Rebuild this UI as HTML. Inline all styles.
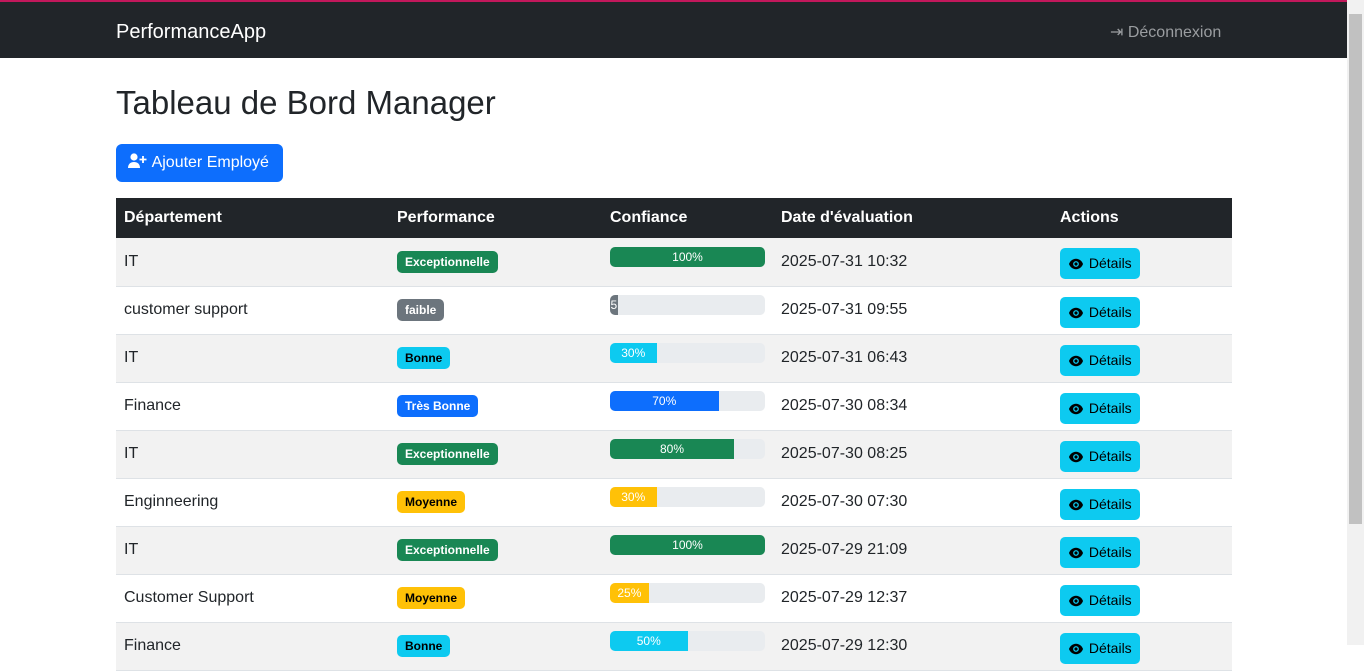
<!DOCTYPE html>
<html><head><meta charset="utf-8"><style>
*{box-sizing:border-box;margin:0;padding:0}
body{width:1364px;height:645px;overflow:hidden;font-family:"Liberation Sans",sans-serif;color:#212529;background:#fff;position:relative}
.top{position:absolute;left:0;top:0;width:1347px;height:58px;background:#212529;border-top:2px solid #c2185b}
.brand{position:absolute;left:116px;top:19px;font-size:20px;color:#fff}
.logout{position:absolute;left:1110px;top:20px;font-size:16px;color:#9a9da0}
.sb{position:absolute;right:0;top:0;width:17px;height:645px;background:#f1f1f1}
.sb div{position:absolute;left:2px;top:14px;width:13px;height:510px;background:#c1c1c1}
h1{position:absolute;left:116px;top:84px;font-size:33px;font-weight:500}
.add{position:absolute;left:116px;top:144px;width:167px;height:38px;background:#0d6efd;border-radius:6px;color:#fff;font-size:16px;padding:9px 0 0 12px}
table{position:absolute;left:116px;top:198px;width:1116px;border-collapse:collapse;font-size:16px}
th{background:#212529;color:#fff;text-align:left;height:40px;padding:0 8px;font-weight:bold}
td{height:48px;padding:0 8px;border-bottom:1px solid #dee2e6;vertical-align:middle}
tr:nth-child(even) td{background:#f2f2f2}
.b{display:inline-block;font-size:12px;font-weight:bold;padding:4px 8px;border-radius:5px;color:#fff;margin-top:0}
.pg{width:155px;height:20px;background:#e9ecef;border-radius:5px;overflow:hidden;margin-top:-10px}
.pg div{height:20px;color:#fff;font-size:12px;text-align:center;line-height:20px}
.btn{display:inline-block;background:#0dcaf0;color:#000;border-radius:5px;width:80px;height:31px;padding:7px 0 0 9px;font-size:14px;margin-top:4px}
.btn svg{vertical-align:-2px;margin-right:2px}
</style></head><body>
<div class="top"><div class="brand">PerformanceApp</div><div class="logout">⇥ Déconnexion</div></div>
<div class="sb"><div></div></div>
<h1>Tableau de Bord Manager</h1>
<div class="add"><svg width="20" height="16" viewBox="0 0 20 16" style="vertical-align:-2px"><circle cx="6" cy="4" r="3.6" fill="#fff"/><path d="M0 15c0-4 2.5-6 6-6s6 2 6 6z" fill="#fff"/><path d="M15 3v7M11.5 6.5h7" stroke="#fff" stroke-width="1.8"/></svg> Ajouter Employé</div>
<table>
<colgroup><col style="width:273px"><col style="width:213px"><col style="width:171px"><col style="width:279px"><col style="width:180px"></colgroup>
<tr><th>Département</th><th>Performance</th><th>Confiance</th><th>Date d'évaluation</th><th>Actions</th></tr>
<tr><td>IT</td><td><span class="b" style="background:#198754">Exceptionnelle</span></td><td><div class="pg"><div style="width:100%;background:#198754">100%</div></div></td><td>2025-07-31 10:32</td><td><span class="btn"><svg width="14" height="12" viewBox="0 0 16 12"><path d="M8 0C4 0 1 3 0 6c1 3 4 6 8 6s7-3 8-6c-1-3-4-6-8-6z" fill="#000"/><circle cx="8" cy="6" r="3.3" fill="#0dcaf0"/><circle cx="8" cy="6" r="1.8" fill="#000"/></svg> Détails</span></td></tr>
<tr><td>customer support</td><td><span class="b" style="background:#6c757d">faible</span></td><td><div class="pg"><div style="width:5%;background:#6c757d">5</div></div></td><td>2025-07-31 09:55</td><td><span class="btn"><svg width="14" height="12" viewBox="0 0 16 12"><path d="M8 0C4 0 1 3 0 6c1 3 4 6 8 6s7-3 8-6c-1-3-4-6-8-6z" fill="#000"/><circle cx="8" cy="6" r="3.3" fill="#0dcaf0"/><circle cx="8" cy="6" r="1.8" fill="#000"/></svg> Détails</span></td></tr>
<tr><td>IT</td><td><span class="b" style="background:#0dcaf0;color:#000">Bonne</span></td><td><div class="pg"><div style="width:30%;background:#0dcaf0">30%</div></div></td><td>2025-07-31 06:43</td><td><span class="btn"><svg width="14" height="12" viewBox="0 0 16 12"><path d="M8 0C4 0 1 3 0 6c1 3 4 6 8 6s7-3 8-6c-1-3-4-6-8-6z" fill="#000"/><circle cx="8" cy="6" r="3.3" fill="#0dcaf0"/><circle cx="8" cy="6" r="1.8" fill="#000"/></svg> Détails</span></td></tr>
<tr><td>Finance</td><td><span class="b" style="background:#0d6efd">Très Bonne</span></td><td><div class="pg"><div style="width:70%;background:#0d6efd">70%</div></div></td><td>2025-07-30 08:34</td><td><span class="btn"><svg width="14" height="12" viewBox="0 0 16 12"><path d="M8 0C4 0 1 3 0 6c1 3 4 6 8 6s7-3 8-6c-1-3-4-6-8-6z" fill="#000"/><circle cx="8" cy="6" r="3.3" fill="#0dcaf0"/><circle cx="8" cy="6" r="1.8" fill="#000"/></svg> Détails</span></td></tr>
<tr><td>IT</td><td><span class="b" style="background:#198754">Exceptionnelle</span></td><td><div class="pg"><div style="width:80%;background:#198754">80%</div></div></td><td>2025-07-30 08:25</td><td><span class="btn"><svg width="14" height="12" viewBox="0 0 16 12"><path d="M8 0C4 0 1 3 0 6c1 3 4 6 8 6s7-3 8-6c-1-3-4-6-8-6z" fill="#000"/><circle cx="8" cy="6" r="3.3" fill="#0dcaf0"/><circle cx="8" cy="6" r="1.8" fill="#000"/></svg> Détails</span></td></tr>
<tr><td>Enginneering</td><td><span class="b" style="background:#ffc107;color:#000">Moyenne</span></td><td><div class="pg"><div style="width:30%;background:#ffc107">30%</div></div></td><td>2025-07-30 07:30</td><td><span class="btn"><svg width="14" height="12" viewBox="0 0 16 12"><path d="M8 0C4 0 1 3 0 6c1 3 4 6 8 6s7-3 8-6c-1-3-4-6-8-6z" fill="#000"/><circle cx="8" cy="6" r="3.3" fill="#0dcaf0"/><circle cx="8" cy="6" r="1.8" fill="#000"/></svg> Détails</span></td></tr>
<tr><td>IT</td><td><span class="b" style="background:#198754">Exceptionnelle</span></td><td><div class="pg"><div style="width:100%;background:#198754">100%</div></div></td><td>2025-07-29 21:09</td><td><span class="btn"><svg width="14" height="12" viewBox="0 0 16 12"><path d="M8 0C4 0 1 3 0 6c1 3 4 6 8 6s7-3 8-6c-1-3-4-6-8-6z" fill="#000"/><circle cx="8" cy="6" r="3.3" fill="#0dcaf0"/><circle cx="8" cy="6" r="1.8" fill="#000"/></svg> Détails</span></td></tr>
<tr><td>Customer Support</td><td><span class="b" style="background:#ffc107;color:#000">Moyenne</span></td><td><div class="pg"><div style="width:25%;background:#ffc107">25%</div></div></td><td>2025-07-29 12:37</td><td><span class="btn"><svg width="14" height="12" viewBox="0 0 16 12"><path d="M8 0C4 0 1 3 0 6c1 3 4 6 8 6s7-3 8-6c-1-3-4-6-8-6z" fill="#000"/><circle cx="8" cy="6" r="3.3" fill="#0dcaf0"/><circle cx="8" cy="6" r="1.8" fill="#000"/></svg> Détails</span></td></tr>
<tr><td>Finance</td><td><span class="b" style="background:#0dcaf0;color:#000">Bonne</span></td><td><div class="pg"><div style="width:50%;background:#0dcaf0">50%</div></div></td><td>2025-07-29 12:30</td><td><span class="btn"><svg width="14" height="12" viewBox="0 0 16 12"><path d="M8 0C4 0 1 3 0 6c1 3 4 6 8 6s7-3 8-6c-1-3-4-6-8-6z" fill="#000"/><circle cx="8" cy="6" r="3.3" fill="#0dcaf0"/><circle cx="8" cy="6" r="1.8" fill="#000"/></svg> Détails</span></td></tr>
</table>
</body></html>
